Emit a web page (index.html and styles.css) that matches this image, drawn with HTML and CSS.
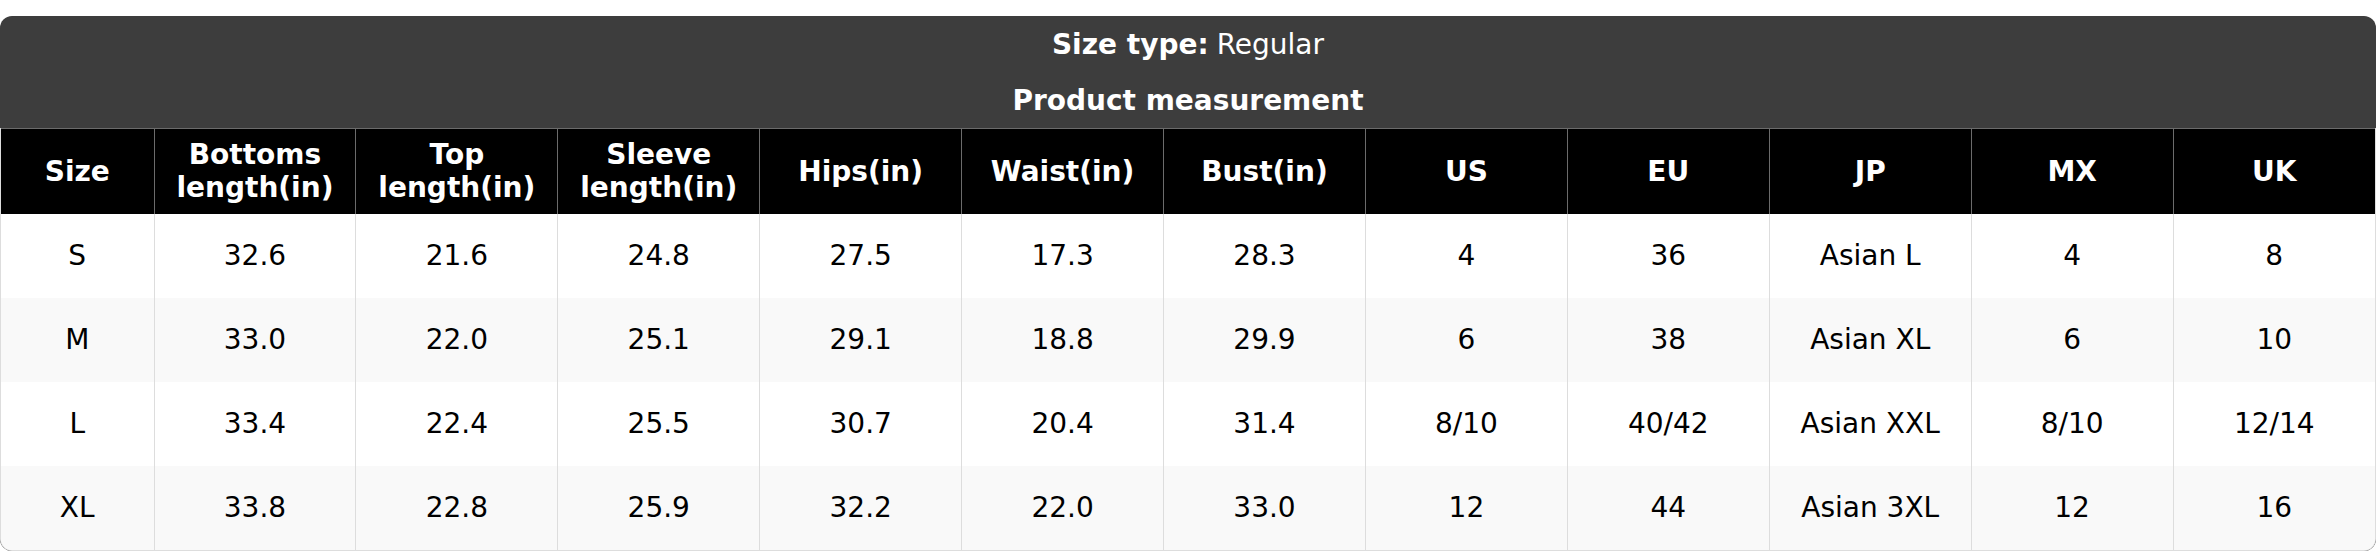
FILE: index.html
```html
<!DOCTYPE html>
<html>
<head>
<meta charset="utf-8">
<link rel="stylesheet" href="styles.css">
</head>
<body>
<div class="card">
  <div class="title-row"><b>Size type:</b> Regular</div>
  <div class="title-row bold">Product measurement</div>
  <div class="table-wrap">
    <table class="size-table">
      <colgroup>
        <col class="col-size">
        <col><col><col><col><col><col><col><col><col><col><col>
      </colgroup>
      <thead>
        <tr>
          <th>Size</th>
          <th>Bottoms length(in)</th>
          <th>Top length(in)</th>
          <th>Sleeve length(in)</th>
          <th>Hips(in)</th>
          <th>Waist(in)</th>
          <th>Bust(in)</th>
          <th>US</th>
          <th>EU</th>
          <th>JP</th>
          <th>MX</th>
          <th>UK</th>
        </tr>
      </thead>
      <tbody>
        <tr><td>S</td><td>32.6</td><td>21.6</td><td>24.8</td><td>27.5</td><td>17.3</td><td>28.3</td><td>4</td><td>36</td><td>Asian L</td><td>4</td><td>8</td></tr>
        <tr><td>M</td><td>33.0</td><td>22.0</td><td>25.1</td><td>29.1</td><td>18.8</td><td>29.9</td><td>6</td><td>38</td><td>Asian XL</td><td>6</td><td>10</td></tr>
        <tr><td>L</td><td>33.4</td><td>22.4</td><td>25.5</td><td>30.7</td><td>20.4</td><td>31.4</td><td>8/10</td><td>40/42</td><td>Asian XXL</td><td>8/10</td><td>12/14</td></tr>
        <tr><td>XL</td><td>33.8</td><td>22.8</td><td>25.9</td><td>32.2</td><td>22.0</td><td>33.0</td><td>12</td><td>44</td><td>Asian 3XL</td><td>12</td><td>16</td></tr>
      </tbody>
    </table>
  </div>
</div>
</body>
</html>
```
FILE: styles.css
```css
html, body {
  margin: 0;
  padding: 0;
  background: #ffffff;
}
body {
  padding-top: 16px;
  font-family: "DejaVu Sans", "Liberation Sans", sans-serif;
  font-size: 28px;
  color: #000000;
}
.card {
  border-radius: 12px;
  overflow: hidden;
  background: #3d3d3d;
}
.title-row {
  height: 56px;
  display: flex;
  align-items: center;
  justify-content: center;
  color: #ffffff;
  line-height: 33px;
}
.title-row b,
.title-row.bold {
  font-weight: bold;
}
.title-row b {
  margin-right: 8px;
}
.table-wrap {
  background: #ffffff;
  border: 1px solid #dddddd;
  border-top: none;
  border-radius: 0 0 12px 12px;
  overflow: hidden;
}
.size-table {
  width: 100%;
  table-layout: fixed;
  border-collapse: collapse;
  border-spacing: 0;
}
.col-size {
  width: 153px;
}
.size-table th {
  background: #000000;
  color: #ffffff;
  font-weight: bold;
  line-height: 33px;
  height: 85px;
  padding: 0 12px;
  border-top: 1px solid #6b6b6b;
  border-left: 1px solid #6b6b6b;
  border-right: 1px solid #6b6b6b;
  text-align: center;
  vertical-align: middle;
  box-sizing: border-box;
}
.size-table th:first-child {
  border-left: none;
}
.size-table th:last-child {
  border-right: none;
}
.size-table td {
  height: 84px;
  padding: 0 12px;
  line-height: 33px;
  text-align: center;
  vertical-align: middle;
  border-left: 1px solid #dddddd;
  border-right: 1px solid #dddddd;
  box-sizing: border-box;
}
.size-table td:first-child {
  border-left: none;
}
.size-table td:last-child {
  border-right: none;
}
.size-table tbody tr:nth-child(even) td {
  background: #f9f9f9;
}
```
